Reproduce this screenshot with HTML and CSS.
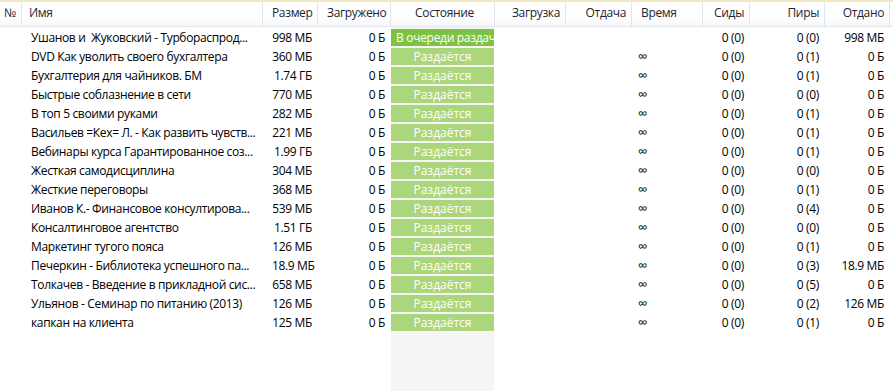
FILE: index.html
```html
<!DOCTYPE html>
<html lang="ru">

<head>
    <meta charset="UTF-8">
    <title>Торренты</title>
    <link rel="stylesheet" href="styles.css">
</head>

<body>
    <div class="list">
        <div class="row head">
            <div class="c num">№</div>
            <div class="c name">Имя</div>
            <div class="c r">Размер</div>
            <div class="c r">Загружено</div>
            <div class="c state-h">Состояние</div>
            <div class="c r">Загрузка</div>
            <div class="c r">Отдача</div>
            <div class="c">Время</div>
            <div class="c r">Сиды</div>
            <div class="c r">Пиры</div>
            <div class="c r">Отдано</div>
        </div>

        <div class="body" id="rows"></div>
    </div>

    <script>
        // name, size, peers, uploaded, queued
        const torrents = [
            ['Ушанов и  Жуковский - Турбораспрод...', '998 МБ', '0 (0)', '998 МБ', true],
            ['DVD Как уволить своего бухгалтера', '360 МБ', '0 (1)', '0 Б'],
            ['Бухгалтерия для чайников. БМ', '1.74 ГБ', '0 (1)', '0 Б'],
            ['Быстрые соблазнение в сети', '770 МБ', '0 (0)', '0 Б'],
            ['В топ 5 своими руками', '282 МБ', '0 (1)', '0 Б'],
            ['Васильев =Кех= Л. - Как развить чувств...', '221 МБ', '0 (1)', '0 Б'],
            ['Вебинары курса Гарантированное соз...', '1.99 ГБ', '0 (1)', '0 Б'],
            ['Жесткая самодисциплина', '304 МБ', '0 (0)', '0 Б'],
            ['Жесткие переговоры', '368 МБ', '0 (1)', '0 Б'],
            ['Иванов К.- Финансовое консултирова...', '539 МБ', '0 (4)', '0 Б'],
            ['Консалтинговое агентство', '1.51 ГБ', '0 (0)', '0 Б'],
            ['Маркетинг тугого пояса', '126 МБ', '0 (1)', '0 Б'],
            ['Печеркин - Библиотека успешного па...', '18.9 МБ', '0 (3)', '18.9 МБ'],
            ['Толкачев - Введение в прикладной сис...', '658 МБ', '0 (5)', '0 Б'],
            ['Ульянов - Семинар по питанию (2013)', '126 МБ', '0 (2)', '126 МБ'],
            ['капкан на клиента', '125 МБ', '0 (1)', '0 Б']
        ];

        const rows = document.getElementById('rows');
        torrents.forEach(function (t) {
            const queued = t[4];
            const row = document.createElement('div');
            row.className = 'row';
            row.innerHTML =
                '<div class="c num"></div>' +
                '<div class="c name">' + t[0] + '</div>' +
                '<div class="c r">' + t[1] + '</div>' +
                '<div class="c r">0 Б</div>' +
                '<div class="c state">' +
                (queued
                    ? '<span class="badge queued">В очереди раздач</span>'
                    : '<span class="badge seeding">Раздаётся</span>') +
                '</div>' +
                '<div class="c r"></div>' +
                '<div class="c r"></div>' +
                '<div class="c time">' + (queued ? '' : '∞') + '</div>' +
                '<div class="c r">0 (0)</div>' +
                '<div class="c r">' + t[2] + '</div>' +
                '<div class="c r">' + t[3] + '</div>';
            rows.appendChild(row);
        });
    </script>
</body>

</html>
```

FILE: styles.css
```css
html,
body {
    height: 100%;
}

body {
    margin: 0;
    background: #fff;
    font-family: "Open Sans", "Noto Sans", sans-serif;
    font-size: 12px;
    letter-spacing: -0.35px;
    color: #000;
    overflow: hidden;
}

.list {
    display: flex;
    flex-direction: column;
    height: 100%;
}

.row {
    display: grid;
    grid-template-columns: 22px 241px 55px 73px 104px 71px 66px 71px 47px 75px 65px;
    height: 19px;
    line-height: 19px;
}

.c {
    padding: 0 6px 0 9px;
    white-space: pre;
    overflow: hidden;
}

.c.r {
    text-align: right;
}

.num {
    padding: 0 0 0 4px;
}

.head {
    height: 24px;
    line-height: 22px;
    border-top: 2px solid #efe8c0;
    border-bottom: 1px solid #e3e6ea;
    background: linear-gradient(#fff, #fff 60%, #f6f7f8);
    color: #1d2533;
}

.head .c {
    border-right: 1px solid #e3e5e8;
    padding-right: 5px;
}

.head .name {
    padding-left: 7px;
}

.head .state-h {
    text-align: center;
}

.body {
    flex: 1;
    padding-top: 1px;
    background: linear-gradient(to right, transparent 391px, #f5f5f5 391px, #f5f5f5 494px, transparent 494px);
}

.state {
    padding: 1px 1px 1px 0;
}

.badge {
    display: block;
    height: 17px;
    line-height: 17px;
    color: #fff;
    overflow: hidden;
    white-space: nowrap;
    letter-spacing: 0;
}

.badge.seeding {
    background: #acd67b;
    text-align: center;
}

.badge.queued {
    background: #7dc243;
    padding-left: 5px;
    letter-spacing: -0.3px;
}

.time {
    padding-left: 6px;
    font-size: 13px;
}
```
